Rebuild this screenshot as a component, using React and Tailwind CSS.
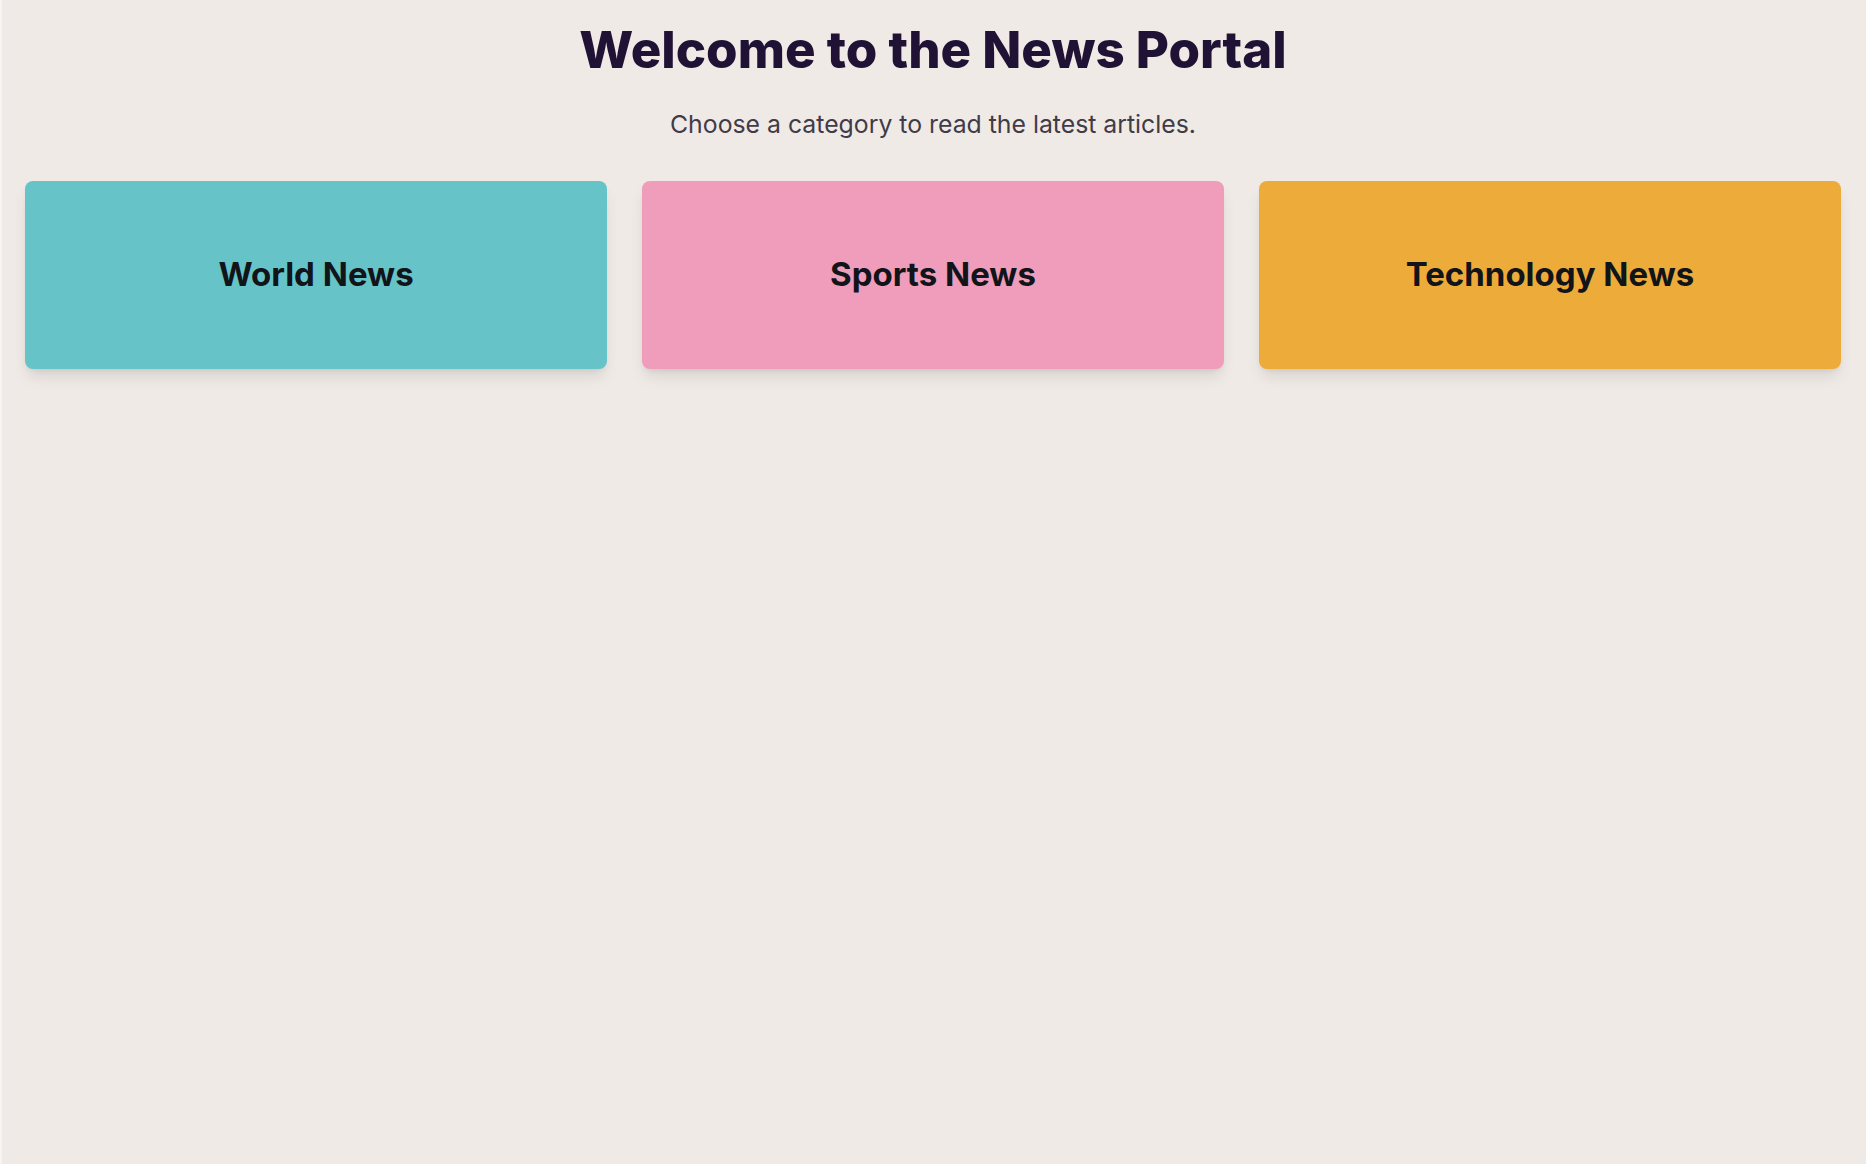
export default function App() {
  const cards = [
    { label: "World News", bg: "bg-[#66c3c7]" },
    { label: "Sports News", bg: "bg-[#ef9dbb]" },
    { label: "Technology News", bg: "bg-[#edac3a]" },
  ];
  return (
    <div className="min-h-[1164px] border-l-2 border-[#f7f5f3] bg-[#efeae6] pl-[23px] pr-[25px] pt-[24px] font-['Inter',sans-serif]">
      <h1 className="text-center text-[51px] font-extrabold leading-none text-[#1f1235]">
        Welcome to the News Portal
      </h1>
      <p className="mt-[33px] text-center text-[24.8px] leading-8 text-[#413b48]">
        Choose a category to read the latest articles.
      </p>
      <div className="mt-[41px] grid grid-cols-3 gap-[35px]">
        {cards.map((c) => (
          <div
            key={c.label}
            className={`${c.bg} flex h-[188px] items-center justify-center rounded-lg shadow-lg`}
          >
            <span className="text-[33px] font-bold text-[#111418]">{c.label}</span>
          </div>
        ))}
      </div>
    </div>
  );
}
